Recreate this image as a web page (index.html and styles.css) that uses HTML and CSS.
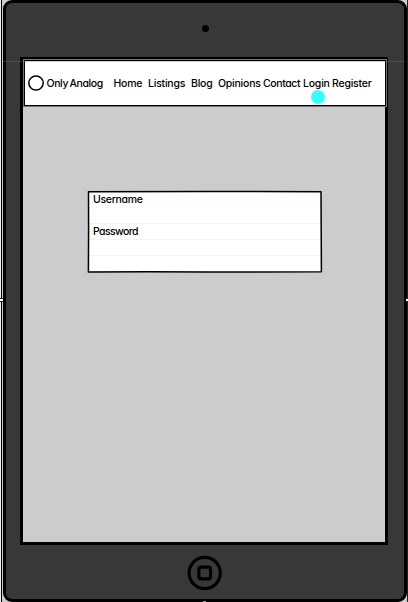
FILE: index.html
```html
<!DOCTYPE html>
<html lang="en">
<head>
<meta charset="utf-8">
<title>Only Analog</title>
<link rel="stylesheet" href="styles.css">
</head>
<body>
<div class="stage">
  <main class="tablet">
    <div class="bezel"><span class="camera"></span></div>
    <section class="screen">
      <header class="bar">
        <svg class="logo" width="16" height="16" viewBox="0 0 16 16"><ellipse cx="8" cy="8" rx="7.2" ry="7" fill="none" stroke="#000" stroke-width="1.5"/></svg>
        <span class="brand">Only Analog</span>
        <nav class="menu">
          <a>Home</a><a>Listings</a><a>Blog</a><a>Opinions</a><a>Contact</a><a class="active">Login<span class="cursor"></span></a><a>Register</a>
        </nav>
      </header>
      <form class="login">
        <div class="row">Username</div>
        <div class="row"></div>
        <div class="row password">Password</div>
        <div class="row"></div>
        <div class="row"></div>
        <svg class="outline" width="236" height="84" viewBox="0 0 236 84" fill="none" stroke="#000" stroke-width="1.5" stroke-linejoin="round"><path d="M1.5 1.7L120 1.4L234 1.7L234.2 40L234.4 81.8L120 82L60 81.8L1.4 82.1L1.6 40Z"/></svg>
      </form>
    </section>
    <div class="chin">
      <svg width="36" height="36" viewBox="0 0 36 36" fill="none" stroke="#000"><circle cx="17.7" cy="18" r="15.6" stroke-width="3.2"/><rect x="11.9" y="12.2" width="11.6" height="11.6" rx="2" stroke-width="3.2"/></svg>
    </div>
  </main>
  <span class="guide"></span>
  <span class="handle left"></span>
  <span class="handle right"></span>
  <span class="handle bottom"></span>
</div>
</body>
</html>
```
FILE: styles.css
```css
* { box-sizing: border-box; }
body { margin: 0; font: 500 10.5px/16px Inter, "Liberation Sans", sans-serif; font-feature-settings: "cv11"; color: #000; }
.stage { position: relative; width: 408px; height: 602px; padding-left: 3px; overflow: hidden; background: #ccc; box-shadow: inset 1px 0 #eee, inset 2px 0 #000, inset -1px 0 #222; }
.tablet { width: 404px; height: 602px; display: flex; flex-direction: column; align-items: center; background: #383838; border: 3px solid #000; border-radius: 9px; }
.bezel { height: 54px; flex: none; display: flex; padding-top: 22px; }
.camera { width: 7px; height: 7px; border-radius: 50%; background: #000; }
.screen { width: 368px; height: 488px; flex: none; margin-right: 2px; border: 3px solid #000; background: #ccc; }
.bar { display: flex; align-items: center; height: 46px; padding-left: 3px; background: #fff; border: 1px solid #000; margin: 0 -1px 0 1px; box-shadow: 0 0 0 1px #777; white-space: nowrap; }
.logo { flex: none; margin-right: 3px; }
.brand { width: 67px; padding-top: 2px; margin-left: -0.5px; letter-spacing: -0.4px; word-spacing: -1px; }
.menu { display: grid; grid-template-columns: 34.5px 43px 27px 45px 40px 29px 44px; padding-top: 2px; letter-spacing: -0.22px; }
.menu a:nth-child(5) { letter-spacing: -0.4px; }
.active { position: relative; }
.cursor { position: absolute; left: 7.5px; top: 14px; width: 14px; height: 14px; border-radius: 50%; background: #33ffff; }
.login { position: relative; width: 233px; height: 81px; margin: 85px 0 0 65px; padding: 1px 0; background: #fff; }
.row { height: 16px; padding-left: 5px; border-bottom: 1px solid #f2f2f2; letter-spacing: -0.3px; line-height: 15px; }
.row:first-child { border-bottom-color: #fafafa; }
.row:last-of-type { border-bottom: 0; }
.password { letter-spacing: -0.6px; }
.outline { position: absolute; left: -1px; top: -1px; }
.chin { display: flex; padding-top: 10px; }
.guide { position: absolute; left: 3px; top: 61px; width: 402px; height: 1px; background: rgba(120,120,120,.35); }
.handle { position: absolute; width: 3px; height: 4px; background: #fff; border: solid #222; border-width: 1px 0; }
.left { left: 0; top: 298px; }
.right { right: 0; top: 298px; width: 2px; }
.bottom { left: 203px; bottom: 0; height: 1px; border: 0; background: #999; }
```
